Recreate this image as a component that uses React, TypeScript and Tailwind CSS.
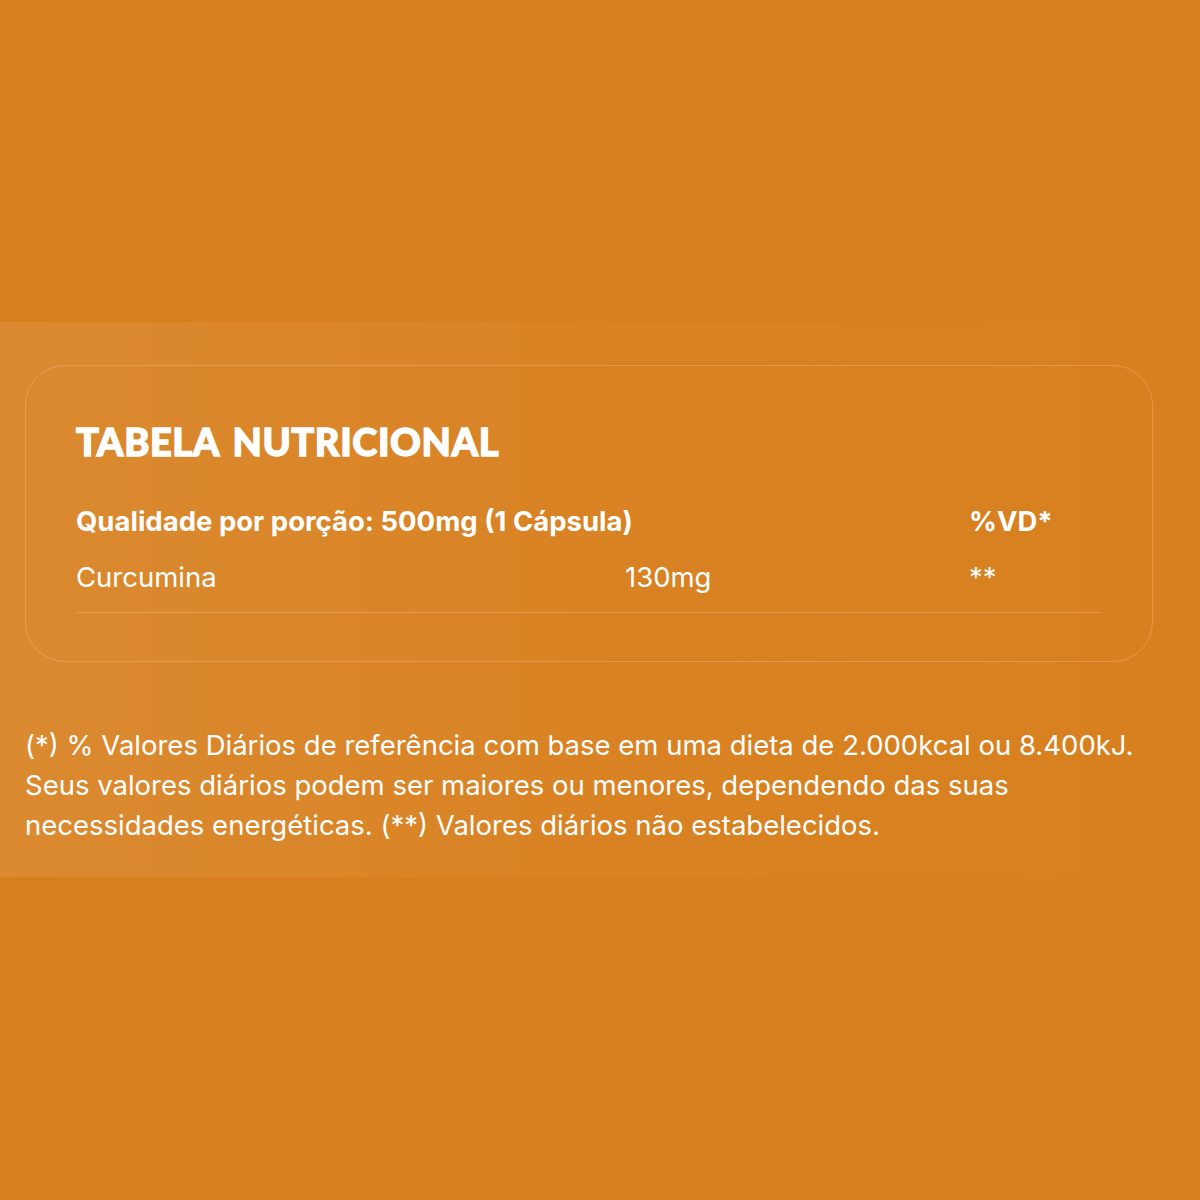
import React from 'react';

const rows = [{ name: 'Curcumina', amount: '130mg', vd: '**' }];

export default function App() {
  return (
    <div className="min-h-[1200px] w-full bg-[#d8801f] font-['Inter',sans-serif] text-white">
      <div className="h-[322px]" />

      {/* Nutrition section */}
      <section className="bg-gradient-to-r from-white/[0.08] via-white/[0.02] to-transparent px-[25px] pt-[43px] pb-[32px]">
        <div className="w-[1128px] rounded-[40px] border border-white/20 px-[50px] pt-[56px] pb-[48px]">
          <h2 className="font-['Lato',sans-serif] text-[38px] font-black uppercase leading-none tracking-[0.6px] [word-spacing:4px] [-webkit-text-stroke:1.3px_white]">
            Tabela Nutricional
          </h2>

          <div className="mt-[45px] grid grid-cols-[549px_344px_1fr] text-[27.5px] leading-[32px]">
            <span className="col-span-2 font-bold">Qualidade por porção: 500mg (1 Cápsula)</span>
            <span className="font-bold">%VD*</span>
          </div>

          {rows.map(r => (
            <div key={r.name} className="mt-[24px] grid grid-cols-[549px_344px_1fr] border-b border-white/20 pb-[19px] text-[27.5px] leading-[32px]">
              <span>{r.name}</span>
              <span>{r.amount}</span>
              <span>{r.vd}</span>
            </div>
          ))}
        </div>

        <p className="mt-[63px] text-[27.5px] leading-[40px] text-white">
          (*) % Valores Diários de referência com base em uma dieta de 2.000kcal ou 8.400kJ.
          <br />
          Seus valores diários podem ser maiores ou menores, dependendo das suas
          <br />
          necessidades energéticas. (**) Valores diários não estabelecidos.
        </p>
      </section>
    </div>
  );
}
